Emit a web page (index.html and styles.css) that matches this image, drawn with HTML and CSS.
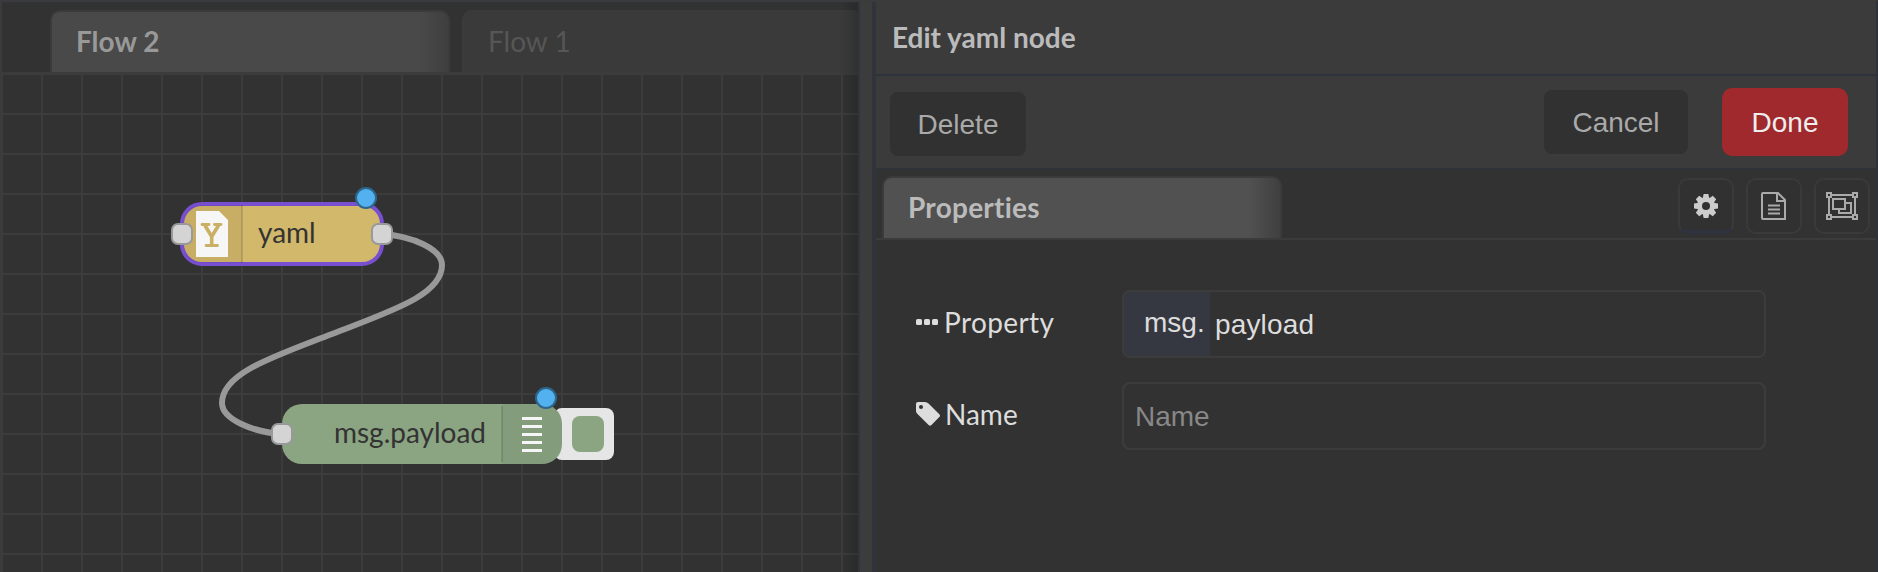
FILE: index.html
```
<!DOCTYPE html>
<html lang="en">
<head>
<meta charset="utf-8">
<title>Edit yaml node</title>
<link rel="stylesheet" href="styles.css">
</head>
<body>
<div class="app">
  <main class="workspace">
    <nav class="flow-tabs">
      <div class="tab flow-tab active">Flow 2</div>
      <div class="tab flow-tab">Flow 1</div>
    </nav>
    <svg class="canvas" width="856" height="498" viewBox="2 74 856 498">
      <defs>
        <pattern id="grid" x="1" y="73" width="40" height="40" patternUnits="userSpaceOnUse">
          <path d="M0 1H40M1 0V40" class="grid-line"/>
        </pattern>
      </defs>
      <rect x="2" y="74" width="856" height="498" fill="url(#grid)"/>
      <path class="wire" d="M382 234C412 236 442 249 442 265C442 295 391 311 332 334S222 373 222 403C222 419 252 432 282 434"/>
      <g>
        <rect class="yaml" x="182" y="204" width="200" height="60" rx="20"/>
        <path class="shade" d="M242 205V263H202Q184 263 184 244V224Q184 205 202 205Z"/>
        <path class="divider" d="M242 205V263"/>
        <path class="icon-fill" d="M196 211H219L228 220V257H196Z"/>
        <path class="y-mark" d="M202 224.500H209M214.500 224.500H221M206 245.500H217.500"/>
        <path class="y-mark stem" d="M205 225.500L211.700 236.500V245M218.500 225.500L211.700 236.500"/>
        <text class="node-label" x="258" y="243">yaml</text>
        <rect class="port" x="172" y="224" width="20" height="20" rx="6"/>
        <rect class="port" x="372" y="224" width="20" height="20" rx="6"/>
        <circle class="changed" cx="366" cy="198" r="10"/>
      </g>
      <g>
        <rect class="button" x="554" y="408" width="60" height="52" rx="8"/>
        <rect class="debug" x="572" y="416" width="32" height="36" rx="8"/>
        <rect class="debug" x="282" y="404" width="280" height="60" rx="20"/>
        <path class="shade" d="M502 404H542Q562 404 562 424V444Q562 464 542 464H502Z"/>
        <path class="divider" d="M502 406V462"/>
        <path class="lines" d="M522 418.500H542M522 426.500H542M522 434.500H542M522 442.500H542M522 450.500H542"/>
        <text class="node-label" x="334" y="443">msg.payload</text>
        <rect class="port" x="272" y="424" width="20" height="20" rx="6"/>
        <circle class="changed" cx="546" cy="398" r="10"/>
      </g>
    </svg>
  </main>
  <div class="separator"></div>
  <aside class="tray">
    <header class="tray-header">Edit yaml node</header>
    <div class="toolbar">
      <button class="btn">Delete</button>
      <button class="btn cancel">Cancel</button>
      <button class="btn done">Done</button>
    </div>
    <div class="tray-tabs">
      <div class="tab prop-tab">Properties</div>
      <div class="icon-tabs">
        <button class="icon-btn selected" aria-label="Properties">
          <svg width="24" height="24" viewBox="0 0 24 24"><g fill="#ccc"><circle cx="12" cy="12" r="9"/><path id="tooth" d="M9.600 0H14.400L15.300 5H8.700ZM9.600 24H14.400L15.300 19H8.700Z"/><use href="#tooth" transform="rotate(45 12 12)"/><use href="#tooth" transform="rotate(90 12 12)"/><use href="#tooth" transform="rotate(135 12 12)"/></g><circle cx="12" cy="12" r="4" fill="#313131"/></svg>
        </button>
        <button class="icon-btn" aria-label="Description">
          <svg width="26" height="28" viewBox="0 0 26 28" class="outline"><path d="M2 1H17L24 8V27H2Q1 27 1 26V2Q1 1 2 1ZM16 1V9H24M7 13.500H19M7 17.500H19M7 21.500H19"/></svg>
        </button>
        <button class="icon-btn" aria-label="Appearance">
          <svg width="32" height="28" viewBox="0 0 32 28" class="outline"><path d="M1 1H5V5H1ZM27 1H31V5H27ZM1 23H5V27H1ZM27 23H31V27H27ZM5 3H27M5 25H27M3 5V23M29 5V23M7 7H19V17H7ZM19 11H25V21H13V17"/></svg>
        </button>
      </div>
    </div>
    <form class="form">
      <div class="row">
        <label class="spaced"><svg width="22" height="6" viewBox="0 0 22 6" class="dots"><rect width="6" height="6" rx="1.500"/><rect x="8" width="6" height="6" rx="1.500"/><rect x="16" width="6" height="6" rx="1.500"/></svg>Property</label>
        <div class="field"><span class="type">msg.</span><span class="value">payload</span></div>
      </div>
      <div class="row">
        <label><svg width="24" height="24" viewBox="0 0 24 24" class="tag"><path fill-rule="evenodd" d="M0 2Q0 0 2 0H9Q11 0 12.500 1.500L23.300 12.300Q24.700 13.700 23.300 15.100L15.500 23Q14 24.500 12.600 23L1.500 12Q0 10.500 0 9ZM5 3A2 2 0 1 0 5 7A2 2 0 1 0 5 3Z"/></svg>Name</label>
        <div class="field"><span class="placeholder">Name</span></div>
      </div>
    </form>
  </aside>
</div>
</body>
</html>
```
FILE: styles.css
```
* { box-sizing: border-box; }
body { margin: 0; background: #323232; font-family: Lato, sans-serif; font-size: 28px; }
.app { display: flex; width: 1878px; height: 572px; border: 2px solid #3b3b3b; border-bottom: 0; border-right-color: #2e323b; overflow: hidden; }
.workspace { width: 856px; flex: none; position: relative; }
.workspace::after { content: ""; position: absolute; top: 0; right: 0; width: 18px; height: 100%; background: linear-gradient(90deg, transparent, rgba(0,0,0,.16)); }
.flow-tabs { height: 72px; padding: 7px 0 0 48px; display: flex; gap: 12px; border-top: 1px solid #30343c; border-bottom: 2px solid #3b3b3b; overflow: hidden; }
.tab { border: 2px solid #3b3b3b; border-bottom: 0; border-radius: 10px 10px 0 0; }
.flow-tab { width: 400px; height: 62px; flex: none; padding: 0 0 0 24px; line-height: 59px; color: #565656; background: #3a3a3a; }
.flow-tab.active { color: #999; font-weight: 700; background: linear-gradient(90deg, #494949 93%, #3f3f3f); }
.canvas { display: block; }
.grid-line { stroke: #3c3c3c; stroke-width: 2; }
.wire { fill: none; stroke: #999; stroke-width: 6; }
.yaml { fill: #d2b86a; stroke: #774fd0; stroke-width: 4; }
.debug { fill: #8ba582; }
.button { fill: #e6e6e6; }
.shade { fill: #000; opacity: .05; }
.divider { stroke: #000; stroke-opacity: .12; stroke-width: 2; }
.icon-fill { fill: #f6f6f6; }
.y-mark { fill: none; stroke: #c9b065; stroke-width: 2.8px; stroke-linecap: round; }
.y-mark.stem { stroke-width: 3.6px; stroke-linecap: butt; }
.lines { stroke: #f6f6f6; stroke-width: 3; }
.node-label { font-size: 28px; fill: #333; }
.port { fill: #d4d4d4; stroke: #999; stroke-width: 2; }
.changed { fill: #53b1f0; stroke: #2d668d; stroke-width: 2; }
.separator { flex: none; width: 18px; background: #3c3c3c; border-left: 2px solid #30343d; border-right: 4px solid #30333a; }
.tray { flex: 1; min-width: 0; }
.tray-header { height: 74px; padding-left: 16px; line-height: 71px; font-weight: 700; color: #bbb; background: #3b3b3b; border-bottom: 2px solid #2e323d; }
.toolbar { height: 92px; padding: 0 28px 0 14px; display: flex; align-items: flex-start; background: #3b3b3b; }
.btn { border: 0; margin: 16px 0 0; padding: 2px 0 0; width: 136px; height: 64px; border-radius: 8px; background: #313131; color: #aaa; font: 28px "Liberation Sans", sans-serif; }
.cancel { width: 144px; margin: 14px 34px 0 auto; }
.done { width: 126px; height: 68px; margin-top: 12px; border-radius: 10px; color: #eee; background: #9f292c; }
.tray-tabs { height: 72px; padding: 8px 6px 0; display: flex; justify-content: space-between; border-top: 2px solid #2f3339; border-bottom: 2px solid #3b3b3b; }
.prop-tab { width: 400px; height: 62px; margin-top: -2px; padding-left: 24px; line-height: 59px; font-weight: 700; letter-spacing: .25px; color: #bbb; background: linear-gradient(90deg, #515151 92%, #404040); }
.icon-tabs { display: flex; gap: 12px; }
.icon-btn { display: flex; align-items: center; justify-content: center; width: 56px; height: 56px; padding: 0; background: #313131; border: 2px solid #3a3a3a; border-radius: 10px; }
.icon-btn.selected { padding-top: 2px; border-bottom: 4px solid #2e333f; }
.outline { fill: none; stroke: #aaa; stroke-width: 2; }
.form { display: flex; flex-direction: column; gap: 24px; padding: 50px 0 0 40px; color: #ddd; }
.row { display: flex; }
label { display: flex; align-items: center; width: 206px; height: 64px; }
.spaced { letter-spacing: .4px; }
.dots { fill: #ddd; margin-right: 6px; }
.tag { fill: #ddd; margin-right: 5px; }
.field { display: flex; width: 644px; height: 68px; border: 2px solid #3c3c3c; border-radius: 8px; font-family: "Liberation Sans", sans-serif; overflow: hidden; }
.type { width: 86px; padding-left: 20px; line-height: 62px; background: #363841; }
.value { padding-left: 5px; line-height: 66px; letter-spacing: .15px; }
.placeholder { padding-left: 11px; line-height: 66px; color: #888; }
```
